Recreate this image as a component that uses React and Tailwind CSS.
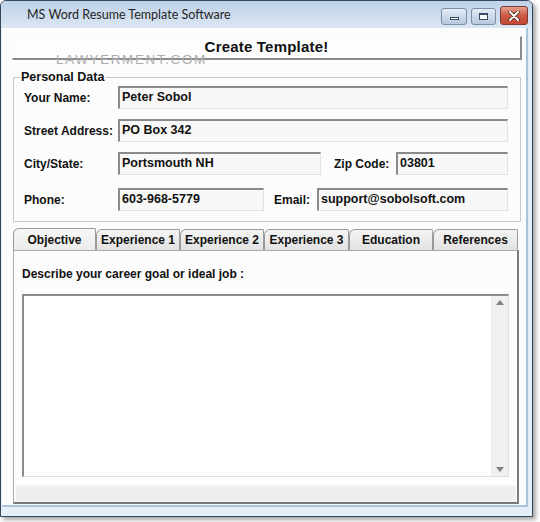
import React from 'react';

const labelCls = 'text-[12px] font-bold text-[#111] leading-[14px]';
const inputCls =
  'h-[23px] bg-[#f8f8f8] border-t-[2px] border-l-[2px] border-r border-b border-t-[#8a8a8a] border-l-[#8a8a8a] border-r-[#e2e2e2] border-b-[#e2e2e2] pl-[2px] pt-[2px] text-[12.5px] font-bold text-[#111] leading-[15px] whitespace-nowrap overflow-hidden';

const tabs = [
  { name: 'Objective', w: 'w-[83px]' },
  { name: 'Experience 1', w: 'w-[84px]' },
  { name: 'Experience 2', w: 'w-[84px]' },
  { name: 'Experience 3', w: 'w-[85px]' },
  { name: 'Education', w: 'w-[84px]' },
  { name: 'References', w: 'w-[85px]' },
];

const Field = ({ children, w }) => <div className={`${inputCls} ${w}`}>{children}</div>;

const App = () => {
  return (
    <div className="w-[540px] h-[522px] bg-white relative overflow-hidden" style={{ fontFamily: '"Liberation Sans", Arial, sans-serif' }}>
      <div className="w-[533px] h-[517px] flex flex-col border border-[#34465a] rounded-t-[6px] shadow-[3px_3px_4px_rgba(0,0,0,0.35)] bg-[#e6eef7]">
        {/* title bar */}
        <div className="h-[27px] shrink-0 flex items-center bg-gradient-to-b from-[#bfd2e9] to-[#dbe6f2] rounded-t-[5px] pl-[26px] pr-[4px]">
          <span className="text-[12.5px] text-[#1f1f1f] mt-[1px]" style={{ fontFamily: 'Lato, "Noto Sans", sans-serif' }}>
            MS Word Resume Template Software
          </span>
          <div className="ml-auto flex items-start self-start mt-[3px] gap-[4px]">
            <div className="w-[26px] h-[17px] mt-[4px] rounded-[3px] border border-[#7a8ea8] bg-gradient-to-b from-[#e3ebf5] to-[#b8c9de] flex items-end justify-center pb-[4px]">
              <div className="w-[9px] h-[3px] border border-[#3c4c60] bg-white"></div>
            </div>
            <div className="w-[25px] h-[17px] mt-[4px] rounded-[3px] border border-[#7a8ea8] bg-gradient-to-b from-[#e3ebf5] to-[#b8c9de] flex items-center justify-center">
              <div className="w-[9px] h-[7px] border border-[#3c4c60] border-t-[2px] bg-white"></div>
            </div>
            <div className="w-[28px] h-[19px] mt-[2px] rounded-[3px] border border-[#7d3a30] bg-gradient-to-b from-[#e3a08f] via-[#cc5a45] to-[#c44a33] flex items-center justify-center">
              <svg width="12" height="10" viewBox="0 0 12 10">
                <path d="M2 1 L10 9 M10 1 L2 9" stroke="#3a1a14" strokeWidth="3.4" strokeLinecap="round" />
                <path d="M2 1 L10 9 M10 1 L2 9" stroke="#ffffff" strokeWidth="2" strokeLinecap="round" />
              </svg>
            </div>
          </div>
        </div>

        {/* client area */}
        <div className="flex-1 mx-[1px] mb-[9px] mr-[4px] bg-[#fcfcfc] border-r-[2px] border-b-[2px] border-[#a9c4dc] flex flex-col relative">
          <div className="mt-[8px] ml-[10px] w-[510px] h-[24px] border border-t-[#fafafa] border-l-[#fafafa] border-r-[2px] border-b-[2px] border-r-[#8a8a8a] border-b-[#8a8a8a] bg-[#fdfdfd] flex items-center justify-center">
            <span className="text-[15px] font-bold text-[#111] tracking-[0.2px]">Create Template!</span>
          </div>

          <span className="absolute left-[54px] top-[24px] text-[13.5px] leading-[16px] tracking-[1.6px] text-[#adadad]">LAWYERMENT.COM</span>

          <fieldset className="mt-[10px] ml-[11px] w-[508px] h-[152px] border border-[#c9c9c9] pl-[10px] pr-[11px]">
            <legend className="ml-[-4px] px-[1px] text-[12.5px] font-bold text-[#111] leading-[14px]">Personal Data</legend>
            <div className="flex items-center mt-[2px]">
              <span className={`${labelCls} w-[94px]`}>Your Name:</span>
              <Field w="w-[390px]">Peter Sobol</Field>
            </div>
            <div className="flex items-center mt-[10px]">
              <span className={`${labelCls} w-[94px]`}>Street Address:</span>
              <Field w="w-[390px]">PO Box 342</Field>
            </div>
            <div className="flex items-center mt-[10px]">
              <span className={`${labelCls} w-[94px]`}>City/State:</span>
              <Field w="w-[203px]">Portsmouth NH</Field>
              <span className={`${labelCls} ml-[13px] w-[62px]`}>Zip Code:</span>
              <Field w="w-[112px]">03801</Field>
            </div>
            <div className="flex items-center mt-[13px]">
              <span className={`${labelCls} w-[94px]`}>Phone:</span>
              <Field w="w-[146px]">603-968-5779</Field>
              <span className={`${labelCls} ml-[10px] w-[43px]`}>Email:</span>
              <Field w="w-[191px]">support@sobolsoft.com</Field>
            </div>
          </fieldset>

          {/* tabs */}
          <div className="mt-[6px] ml-[11px] flex items-end h-[22px]">
            {tabs.map((t, i) => (
              <div
                key={t.name}
                className={`${t.w} ${i === 0 ? 'h-[22px] bg-gradient-to-b from-[#f6f6f6] to-[#ececec]' : 'h-[21px] bg-gradient-to-b from-[#f4f4f4] to-[#e2e2e2]'} border border-b-0 border-[#9a9a9a] rounded-tl-[6px] rounded-tr-[2px] flex items-center justify-center text-[12px] font-bold text-[#111] leading-[14px] whitespace-nowrap`}
              >
                {t.name}
              </div>
            ))}
          </div>

          <div className="ml-[11px] w-[506px] h-[254px] border border-[#a8a8a8] border-r-[2px] border-r-[#7a7a7a] border-b-[2px] border-b-[#7a7a7a] bg-[#fcfcfc] flex flex-col">
            <span className={`${labelCls} mt-[16px] ml-[8px]`}>Describe your career goal or ideal job :</span>
            <div className="mt-[13px] ml-[8px] w-[487px] h-[183px] border-t-[2px] border-l-[2px] border-[#8c8c8c] border-r border-b border-r-[#dedede] border-b-[#dedede] bg-white flex">
              <div className="flex-1"></div>
              <div className="w-[17px] bg-[#f0f0f0] flex flex-col items-center justify-between py-[4px]">
                <svg width="8" height="5" viewBox="0 0 8 5"><path d="M0 5 L4 0 L8 5 Z" fill="#808080" /></svg>
                <svg width="8" height="5" viewBox="0 0 8 5"><path d="M0 0 L4 5 L8 0 Z" fill="#808080" /></svg>
              </div>
            </div>
            <div className="mt-[8px] ml-[2px] mr-[1px] flex-1 bg-[#efefef] border-t border-[#f8f8f8]"></div>
          </div>
        </div>
      </div>
    </div>
  );
};

export default App;
